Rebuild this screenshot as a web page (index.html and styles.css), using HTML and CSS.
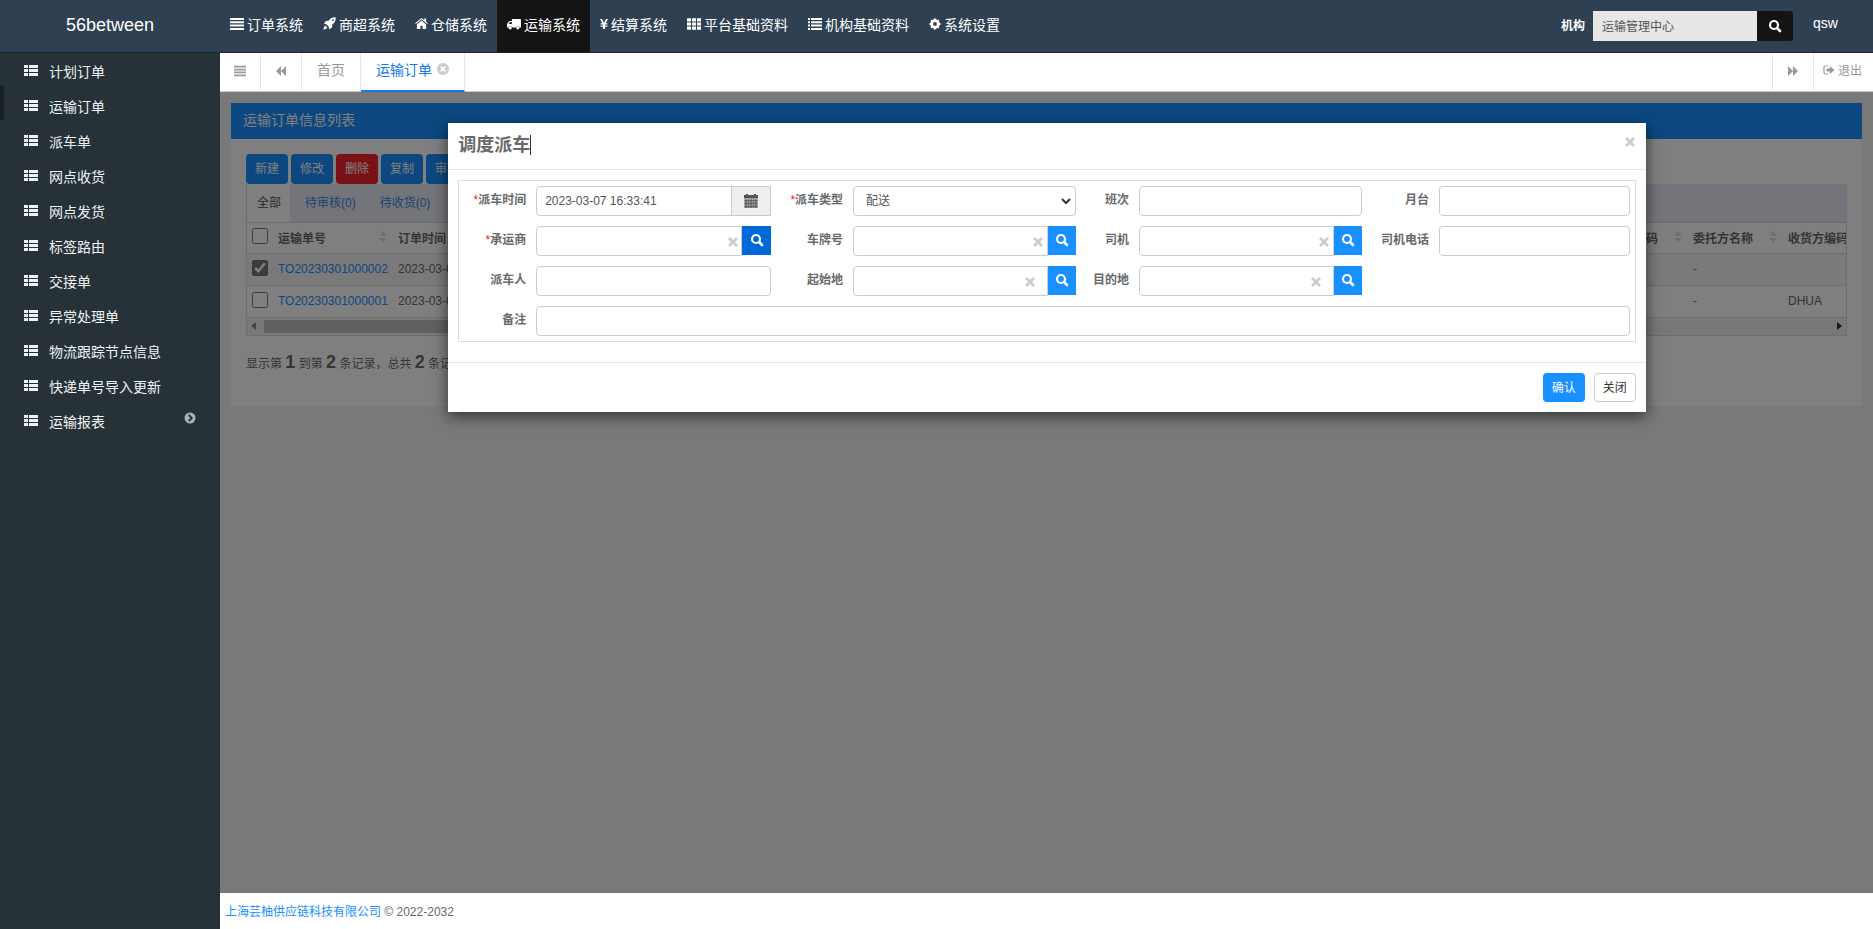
FILE: index.html
```html
<!DOCTYPE html>
<html lang="zh-CN">
<head>
<meta charset="utf-8">
<title>56between</title>
<link rel="stylesheet" href="styles.css">
</head>
<body>
<svg class="sprite" aria-hidden="true">
  <symbol id="i-bars" viewBox="0 0 14 14"><path d="M0 1h14v2H0zM0 4.300h14v2H0zM0 7.600h14v2H0zM0 11h14v2H0z"/></symbol>
  <symbol id="i-rocket" viewBox="0 0 14 14"><path fill-rule="evenodd" d="M13.700.3C10.500 0 8 1.200 6 4L3 4.200 1 7.600l2.600.2 2.700 2.600.2 2.800 3.300-2L10 8c2.800-2 4-4.600 3.700-7.700zM10.700 2.300a1 1 0 1 1 0 2 1 1 0 0 1 0-2zM2.600 9.300C1 10 .7 11.500.5 13.600c2-.2 3.500-.6 4.200-2.200z"/></symbol>
  <symbol id="i-home" viewBox="0 0 14 14"><path d="M7 3.800 2 8v4.500c0 .3.200.5.5.5H5.800V9.500h2.400V13h3.300c.3 0 .5-.2.500-.5V8zM13.800 6.800 12 5.200V1.600h-2v2L7.700 1.600c-.4-.3-1-.3-1.400 0L.2 6.800l.7.8L7 2.500l6.100 5.100z"/></symbol>
  <symbol id="i-truck" viewBox="0 0 14 14"><path fill-rule="evenodd" d="M5.500 2H13c.6 0 1 .3 1 .9v7.600h-1.300a2 2 0 0 0-3.900 0H5.200a2 2 0 0 0-3.900 0H0V7.300l.3-.8L2.200 4.300 3 4h1.800V2.700zM1.500 6.900h3.300V5H3.200zM3.200 9.200a1.600 1.600 0 1 1 0 3.300 1.600 1.600 0 0 1 0-3.300zM10.800 9.200a1.600 1.600 0 1 1 0 3.300 1.600 1.600 0 0 1 0-3.300z"/></symbol>
  <symbol id="i-yen" viewBox="0 0 8 14"><path d="M0 2h2.100L4 6l1.900-4H8L5.700 6.300h1.700v1.200H5v1h2.400v1.200H5V12H3V9.700H.6V8.500H3v-1H.6V6.300h1.700z"/></symbol>
  <symbol id="i-th" viewBox="0 0 14 14"><path d="M0 1.200h4v3.200H0zM5 1.200h4v3.200H5zM10 1.200h4v3.200h-4zM0 5.400h4v3.200H0zM5 5.400h4v3.200H5zM10 5.400h4v3.200h-4zM0 9.600h4v3.200H0zM5 9.600h4v3.200H5zM10 9.600h4v3.200h-4z"/></symbol>
  <symbol id="i-list" viewBox="0 0 14 14"><path d="M0 1h2v2H0zM3 1h11v2H3zM0 4.300h2v2H0zM3 4.300h11v2H3zM0 7.600h2v2H0zM3 7.600h11v2H3zM0 11h2v2H0zM3 11h11v2H3z"/></symbol>
  <symbol id="i-thlist" viewBox="0 0 14 14"><path d="M0 1h4v3H0zM5 1h9v3H5zM0 5h4v3H0zM5 5h9v3H5zM0 9h4v3H0zM5 9h9v3H5z"/></symbol>
  <symbol id="i-cog" viewBox="0 0 14 14"><circle cx="7" cy="7" r="3.800" fill="none" stroke="currentColor" stroke-width="3.200"/><path d="M5.800.6h2.400l.4 2.900H5.400zM5.800 13.400h2.400l.4-2.900H5.400zM.6 5.800v2.400l2.900.4V5.400zM13.400 5.800v2.400l-2.900.4V5.400zM1.700 3.400 3.400 1.700l2.200 1.800-2.100 2.100zM12.300 3.400 10.600 1.700 8.400 3.500l2.100 2.100zM1.700 10.600l1.700 1.700 2.200-1.800-2.100-2.100zM12.300 10.600l-1.700 1.700-2.200-1.800 2.100-2.100z"/></symbol>
  <symbol id="i-search" viewBox="0 0 14 14"><path fill="none" stroke="currentColor" stroke-width="2.200" d="M10 6a4 4 0 1 1-8 0 4 4 0 0 1 8 0z"/><path fill="none" stroke="currentColor" stroke-width="2.600" stroke-linecap="round" d="m9.500 9.500 2.500 2.500"/></symbol>
  <symbol id="i-back" viewBox="0 0 12 12"><path d="M6 1v10L1 6zM11 1v10L6 6z"/></symbol>
  <symbol id="i-fwd" viewBox="0 0 12 12"><path d="M6 1v10l5-5zM1 1v10l5-5z"/></symbol>
  <symbol id="i-out" viewBox="0 0 12 12"><path fill="none" stroke="currentColor" stroke-width="1.200" d="M5 2H2.500Q1 2 1 3.500v5Q1 10 2.500 10H5"/><path d="M3.500 4.500h3.300V2L11.500 6 6.800 10V7.500H3.500z"/></symbol>
  <symbol id="i-times" viewBox="0 0 12 12"><path fill="none" stroke="currentColor" stroke-width="2.800" d="m2 2 8 8M10 2l-8 8"/></symbol>
  <symbol id="i-closec" viewBox="0 0 12 12"><circle cx="6" cy="6" r="6"/><path fill="none" stroke="#fff" stroke-width="1.800" d="m3.700 3.700 4.600 4.600M8.300 3.700 3.700 8.300"/></symbol>
  <symbol id="i-chevc" viewBox="0 0 12 12"><circle cx="6" cy="6" r="5.500"/><path fill="none" stroke="#263238" stroke-width="1.800" d="m4.800 3 3 3-3 3"/></symbol>
  <symbol id="i-cal" viewBox="0 0 14 14"><path d="M0 1h2V0h2v1h6V0h2v1h2v3.500H0z"/><path d="M0 5.500h14V14H0z" opacity=".5"/><path d="M1 5.500h2v2H1zM3.500 5.500h2v2h-2zM6 5.500h2v2H6zM8.500 5.500h2v2h-2zM11 5.500h2v2h-2zM1 8.500h2v2H1zM3.500 8.500h2v2h-2zM6 8.500h2v2H6zM8.500 8.500h2v2h-2zM11 8.500h2v2h-2zM1 11.500h2v2H1zM3.500 11.500h2v2h-2zM6 11.500h2v2H6zM8.500 11.500h2v2h-2zM11 11.500h2v2h-2z"/></symbol>
  <symbol id="i-sort" viewBox="0 0 8 14"><path d="M4 1l3.500 5h-7zM4 13l3.500-5h-7z"/></symbol>
</svg>

<header class="topbar">
  <a class="brand" href="#">56between</a>
  <nav class="systems">
    <a href="#"><svg class="ico"><use href="#i-bars"/></svg>订单系统</a>
    <a href="#"><svg class="ico ico-n"><use href="#i-rocket"/></svg>商超系统</a>
    <a href="#"><svg class="ico ico-n"><use href="#i-home"/></svg>仓储系统</a>
    <a href="#" class="on"><svg class="ico"><use href="#i-truck"/></svg>运输系统</a>
    <a href="#"><svg class="ico ico-y"><use href="#i-yen"/></svg>结算系统</a>
    <a href="#"><svg class="ico"><use href="#i-th"/></svg>平台基础资料</a>
    <a href="#"><svg class="ico"><use href="#i-list"/></svg>机构基础资料</a>
    <a href="#"><svg class="ico ico-c"><use href="#i-cog"/></svg>系统设置</a>
  </nav>
  <form class="org">
    <label for="org">机构</label>
    <input id="org" type="text" value="运输管理中心">
    <button type="button" aria-label="搜索"><svg class="ico"><use href="#i-search"/></svg></button>
  </form>
  <a class="user" href="#">qsw</a>
</header>

<div class="shell">
  <aside class="sidebar">
    <a href="#"><svg class="ico"><use href="#i-thlist"/></svg>计划订单</a>
    <a href="#" class="on"><svg class="ico"><use href="#i-thlist"/></svg>运输订单</a>
    <a href="#"><svg class="ico"><use href="#i-thlist"/></svg>派车单</a>
    <a href="#"><svg class="ico"><use href="#i-thlist"/></svg>网点收货</a>
    <a href="#"><svg class="ico"><use href="#i-thlist"/></svg>网点发货</a>
    <a href="#"><svg class="ico"><use href="#i-thlist"/></svg>标签路由</a>
    <a href="#"><svg class="ico"><use href="#i-thlist"/></svg>交接单</a>
    <a href="#"><svg class="ico"><use href="#i-thlist"/></svg>异常处理单</a>
    <a href="#"><svg class="ico"><use href="#i-thlist"/></svg>物流跟踪节点信息</a>
    <a href="#"><svg class="ico"><use href="#i-thlist"/></svg>快递单号导入更新</a>
    <a href="#"><svg class="ico"><use href="#i-thlist"/></svg>运输报表<svg class="more"><use href="#i-chevc"/></svg></a>
  </aside>

  <div class="main">
    <div class="tabbar">
      <button class="tb-btn" type="button" aria-label="菜单"><svg class="i12"><use href="#i-bars"/></svg></button>
      <button class="tb-btn" type="button" aria-label="左移"><svg class="i12"><use href="#i-back"/></svg></button>
      <a class="tb-tab" href="#">首页</a>
      <a class="tb-tab on" href="#">运输订单<svg class="i12"><use href="#i-closec"/></svg></a>
      <button class="tb-btn tb-right" type="button" aria-label="右移"><svg class="i12"><use href="#i-fwd"/></svg></button>
      <a class="tb-out" href="#"><svg class="i12"><use href="#i-out"/></svg>退出</a>
    </div>

    <div class="content">
      <section class="panel">
        <h2>运输订单信息列表</h2>
        <div class="panel-body">
          <div class="tools">
            <button class="btn" type="button">新建</button>
            <button class="btn" type="button">修改</button>
            <button class="btn danger" type="button">删除</button>
            <button class="btn" type="button">复制</button>
            <button class="btn" type="button">审核</button>
          </div>
          <div class="states">
            <a class="on" href="#">全部</a>
            <a href="#">待审核(0)</a>
            <a href="#">待收货(0)</a>
          </div>
          <div class="grid">
            <table>
              <colgroup><col class="c-check"><col class="c-no"><col><col class="c-std"><col class="c-std"><col class="c-last"></colgroup>
              <thead>
                <tr>
                  <th><input type="checkbox" aria-label="全选"></th>
                  <th><span>运输单号<svg class="sort"><use href="#i-sort"/></svg></span></th>
                  <th>订单时间</th>
                  <th><span>委托方编码<svg class="sort"><use href="#i-sort"/></svg></span></th>
                  <th><span>委托方名称<svg class="sort"><use href="#i-sort"/></svg></span></th>
                  <th>收货方编码</th>
                </tr>
              </thead>
              <tbody>
                <tr class="sel">
                  <td><input type="checkbox" checked aria-label="选择"></td>
                  <td><a href="#">TO20230301000002</a></td>
                  <td>2023-03-01</td><td></td><td>-</td><td></td>
                </tr>
                <tr>
                  <td><input type="checkbox" aria-label="选择"></td>
                  <td><a href="#">TO20230301000001</a></td>
                  <td>2023-03-01</td><td></td><td>-</td><td>DHUA</td>
                </tr>
              </tbody>
            </table>
            <div class="scroll"><i class="arr-l"></i><i class="thumb"></i><i class="arr-r"></i></div>
          </div>
          <p class="count">显示第 <b>1</b> 到第 <b>2</b> 条记录，总共 <b>2</b> 条记录</p>
        </div>
      </section>

      <div class="backdrop">
        <div class="modal" role="dialog" aria-labelledby="dlg">
          <div class="modal-head">
            <h3 id="dlg">调度派车<span class="caret"></span></h3>
            <button class="close" type="button" aria-label="关闭"><svg class="i12"><use href="#i-times"/></svg></button>
          </div>
          <form class="fields">
            <label for="f1"><em>*</em>派车时间</label>
            <div class="group"><input id="f1" type="text" value="2023-03-07 16:33:41"><button class="cal" type="button" aria-label="日历"><svg class="ico"><use href="#i-cal"/></svg></button></div>
            <label for="f2"><em>*</em>派车类型</label>
            <div class="group pick"><select id="f2"><option>配送</option></select><svg class="chev" viewBox="0 0 10 10"><path d="m1 3 4 4 4-4"/></svg></div>
            <label for="f3">班次</label>
            <div class="group"><input id="f3" type="text"></div>
            <label for="f4">月台</label>
            <div class="group"><input id="f4" type="text"></div>

            <label for="f5"><em>*</em>承运商</label>
            <div class="group look"><input id="f5" type="text"><svg class="clear"><use href="#i-times"/></svg><button class="find hot" type="button" aria-label="搜索"><svg class="ico"><use href="#i-search"/></svg></button></div>
            <label for="f6">车牌号</label>
            <div class="group look"><input id="f6" type="text"><svg class="clear"><use href="#i-times"/></svg><button class="find" type="button" aria-label="搜索"><svg class="ico"><use href="#i-search"/></svg></button></div>
            <label for="f7">司机</label>
            <div class="group look"><input id="f7" type="text"><svg class="clear"><use href="#i-times"/></svg><button class="find" type="button" aria-label="搜索"><svg class="ico"><use href="#i-search"/></svg></button></div>
            <label for="f8">司机电话</label>
            <div class="group"><input id="f8" type="text"></div>

            <label for="f9">派车人</label>
            <div class="group"><input id="f9" type="text"></div>
            <label for="f10">起始地</label>
            <div class="group look far"><input id="f10" type="text"><svg class="clear"><use href="#i-times"/></svg><button class="find" type="button" aria-label="搜索"><svg class="ico"><use href="#i-search"/></svg></button></div>
            <label for="f11">目的地</label>
            <div class="group look far"><input id="f11" type="text"><svg class="clear"><use href="#i-times"/></svg><button class="find" type="button" aria-label="搜索"><svg class="ico"><use href="#i-search"/></svg></button></div>

            <label for="f12" class="first">备注</label>
            <div class="group wide"><input id="f12" type="text"></div>
          </form>
          <div class="modal-foot">
            <button class="ok" type="button">确认</button>
            <button class="cancel" type="button">关闭</button>
          </div>
        </div>
      </div>
    </div>

    <footer class="foot"><a href="#">上海芸柚供应链科技有限公司</a> © 2022-2032</footer>
  </div>
</div>
</body>
</html>
```
FILE: styles.css
```css
* { box-sizing: border-box; }
body, input, button, select {
  font-family: "Liberation Sans", "Noto Sans CJK SC", sans-serif;
  font-size: 12px;
}
body {
  margin: 0;
  height: 100vh;
  display: flex;
  flex-direction: column;
  overflow: hidden;
  color: #676a6c;
  background: #fff;
}
a { text-decoration: none; color: #1890ff; }
button { cursor: pointer; border: 0; padding: 0; }
svg { fill: currentColor; flex: none; }
.sprite { position: absolute; width: 0; height: 0; }
.ico { width: 14px; height: 14px; }
.ico-n { width: 13px; height: 13px; }
.ico-c { width: 12px; height: 12px; }
.ico-y { width: 8px; }
.i12 { width: 12px; height: 12px; }

/* Top bar */
.topbar {
  display: flex;
  flex: none;
  height: 53px;
  background: #2f4052;
  border-bottom: 1px solid #1b242d;
  color: #fff;
}
.brand {
  width: 220px;
  text-align: center;
  font-size: 18px;
  line-height: 50px;
  color: #fff;
}
.systems { display: flex; flex: 1; }
.systems a {
  display: flex;
  align-items: center;
  gap: 3px;
  padding: 0 10px 5px;
  font-size: 14px;
  color: #fff;
  white-space: nowrap;
}
.systems .on { background: #141414; }
.org { display: flex; align-items: center; padding-bottom: 1px; }
.org label { font-weight: bold; padding: 0 8px 2px 0; }
.org input {
  width: 164px;
  height: 30px;
  border: 0;
  padding: 0 9px;
  color: #555;
  background: #e6e6e6;
}
.org button {
  width: 36px;
  height: 30px;
  color: #fff;
  background: #141414;
  border-radius: 0 3px 3px 0;
}
.org .ico, .find .ico, .cal .ico { display: block; margin: 0 auto; }
.user {
  width: 80px;
  padding-left: 20px;
  font-size: 14px;
  line-height: 46px;
  color: #fff;
}

/* Side menu */
.shell { display: flex; flex: 1; min-height: 0; }
.sidebar { width: 220px; flex: none; background: #263238; }
.sidebar a {
  position: relative;
  display: flex;
  align-items: center;
  gap: 11px;
  height: 35px;
  padding-left: 24px;
  font-size: 14px;
  color: #f0f3f5;
}
.sidebar .on::before {
  content: "";
  position: absolute;
  left: 0;
  top: -3px;
  width: 4px;
  height: 35px;
  background: #1b2226;
}
.more { width: 12px; height: 12px; margin: 0 24px 6px auto; color: #a7b1b8; }

/* Page tabs */
.main { display: flex; flex-direction: column; flex: 1; min-width: 0; }
.tabbar {
  display: flex;
  flex: none;
  height: 39px;
  background: #fff;
  border-bottom: 1px solid #ccc;
  color: #999;
}
.tb-btn {
  width: 41px;
  color: #999;
  background: none;
  border-right: 1px solid #e7e7e7;
  padding-bottom: 3px;
}
.tb-btn svg { display: block; margin: 0 auto; }
.tb-tab {
  display: flex;
  align-items: center;
  gap: 5px;
  padding: 0 15px 6px;
  font-size: 14px;
  color: #999;
  border-right: 1px solid #e7e7e7;
}
.tb-tab .i12 { color: #ccc; }
.tb-tab.on {
  height: 39px;
  padding-bottom: 5px;
  color: #1478ec;
  border-bottom: 2px solid #1478ec;
}
.tb-right { margin-left: auto; border-left: 1px solid #e7e7e7; width: 42px; }
.tb-out {
  display: flex;
  align-items: center;
  gap: 3px;
  padding: 0 11px 5px 9px;
  color: #999;
}

/* Order list */
.content { position: relative; flex: 1; min-height: 0; padding: 11px; background: #f3f3f4; }
.panel { background: #fff; }
.panel h2 {
  margin: 0;
  padding: 0 12px 2px;
  font-size: 14px;
  font-weight: normal;
  line-height: 34px;
  color: #fff;
  background: #1890ff;
}
.panel-body { padding: 15px 15px 29px; }
.tools { display: flex; gap: 3px; }
.btn {
  width: 42px;
  height: 30px;
  padding-bottom: 3px;
  border-radius: 4px;
  color: #fff;
  background: #1890ff;
}
.danger { background: #f5222d; }
.states { display: flex; height: 38px; background: #e9ebf5; }
.states a { padding: 0 12px; line-height: 38px; color: #3a84da; }
.states .on { padding: 0 9px 0 10px; margin-right: 3px; color: #555; background: #fff; border-left: 1px solid #ddd; }
.grid { border: 1px solid #ddd; overflow: hidden; }
table { width: 100%; table-layout: fixed; border-collapse: collapse; }
.c-check { width: 23px; }
.c-no { width: 120px; }
.c-std { width: 95px; }
.c-last { width: 66px; }
th, td {
  height: 32px;
  padding: 0 0 0 8px;
  text-align: left;
  white-space: nowrap;
  overflow: hidden;
  border-bottom: 1px solid #ddd;
}
th { height: 30px; padding-bottom: 1px; }
th:first-child, td:first-child { padding-left: 5px; }
th span { display: flex; align-items: center; justify-content: space-between; }
.sort { width: 8px; height: 14px; margin-right: 3px; color: #ddd; }
.grid input { display: block; width: 16px; height: 16px; margin: 0 0 3px; accent-color: #767676; }
.sel { background: #f5f5f5; }
.scroll { display: flex; align-items: center; height: 17px; background: #f1f1f1; }
.scroll i { display: block; }
.arr-l, .arr-r { border: 4px solid transparent; }
.arr-l { border-right: 5px solid #888; margin: 0 8px 0 0; }
.arr-r { border-left: 5px solid #333; margin-left: auto; }
.thumb { width: 60%; height: 13px; background: #c1c1c1; }
.count { margin: 13px 0 0; line-height: 26px; }
.count b { font-size: 18px; }

/* Dispatch dialog */
.backdrop {
  position: absolute;
  inset: 0;
  display: flex;
  justify-content: center;
  align-items: flex-start;
  padding: 31px 0 0 1px;
  background: rgba(0, 0, 0, .5);
}
.modal { width: 72.5%; background: #fff; box-shadow: 0 4px 14px rgba(0, 0, 0, .6); }
.modal-head {
  display: flex;
  justify-content: space-between;
  align-items: flex-start;
  height: 47px;
  padding: 9px 10px 0;
  border-bottom: 1px solid #e5e5e5;
}
.modal-head h3 { display: flex; align-items: center; margin: 0; font-size: 18px; line-height: 26px; }
.caret { width: 1px; height: 20px; background: #333; }
.close { height: 20px; width: 12px; color: #ccc; background: none; }
.close svg { display: block; }
.fields {
  display: grid;
  grid-template-columns: 77px 235fr 82px 223fr 63px 223fr 77px 191fr;
  row-gap: 10px;
  margin: 10px 10px 20px;
  padding: 5px 5px 5px 0;
  border: 1px solid #ddd;
}
.fields label {
  padding-right: 10px;
  text-align: right;
  line-height: 29px;
  font-weight: bold;
}
.first { grid-column: 1; }
.fields em { font-style: normal; font-weight: normal; color: #e02020; }
.group { display: flex; position: relative; }
.wide { grid-column: 2 / -1; }
.group input, .group select {
  flex: 1;
  min-width: 0;
  width: 100%;
  height: 30px;
  padding: 0 8px;
  border: 1px solid #ccc;
  border-radius: 4px;
  color: #555;
  background: #fff;
}
.group select { appearance: none; padding-left: 12px; }
.chev {
  position: absolute;
  right: 5px;
  top: 10px;
  width: 10px;
  height: 10px;
  fill: none;
  stroke: #333;
  stroke-width: 2;
}
.cal { width: 40px; color: #555; background: #eee; border: 1px solid #ccc; margin-left: -1px; }
.group input:not(:last-child) { border-radius: 4px 0 0 4px; }
.find { width: 28px; height: 29px; color: #fff; background: #1890ff; padding-bottom: 1px; }
.hot { width: 29px; background: #0069d9; }
.clear { position: absolute; right: 32px; top: 10px; width: 12px; height: 12px; color: #ccc; }
.far .clear { right: 40px; }
.modal-foot {
  display: flex;
  justify-content: flex-end;
  gap: 9px;
  padding: 10px;
  border-top: 1px solid #e5e5e5;
}
.ok, .cancel { width: 42px; height: 29px; padding-bottom: 2px; border-radius: 4px; }
.ok { color: #fff; background: #1890ff; }
.cancel { color: #333; background: #fff; border: 1px solid #ccc; }

.foot { flex: none; height: 36px; padding-left: 5px; line-height: 39px; }
```
